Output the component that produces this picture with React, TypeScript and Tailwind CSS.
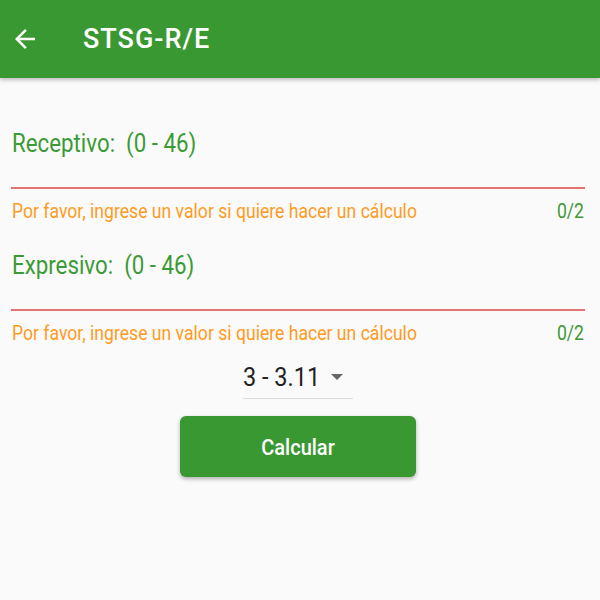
import React from "react";

function Field({ label, gapTop }: { label: string; gapTop: string }) {
  return (
    <div className="flex flex-col">
      <div className={`pl-[12px] h-[28px] leading-[28px] text-[22.3px] text-[#3b9a35] ${gapTop}`}>
        <span className="inline-block whitespace-pre scale-y-[1.12]">{label}</span>
      </div>
      <div className="mt-[30px] ml-[11px] mr-[15px] h-[2px] bg-[#e57373]"></div>
      <div className="flex justify-between pl-[12px] pr-[16px] mt-[12px] h-[20px] leading-[20px] text-[17.6px]">
        <span className="inline-block scale-y-[1.12] text-[#ff9a1f]">Por favor, ingrese un valor si quiere hacer un cálculo</span>
        <span className="inline-block scale-y-[1.12] text-[#3b9a35]">0/2</span>
      </div>
    </div>
  );
}

export default function App() {
  return (
    <div className="w-[600px] h-[600px] bg-[#fafafa] flex flex-col" style={{ fontFamily: "Roboto, 'Liberation Sans', sans-serif" }}>
      <div className="h-[78px] bg-[#3a9832] flex items-center shadow-[0_2px_4px_rgba(0,0,0,0.25)] relative z-10">
        <svg width="30" height="30" viewBox="0 0 24 24" className="ml-[10px]">
          <path d="M20 11H7.83l5.59-5.59L12 4l-8 8 8 8 1.41-1.41L7.83 13H20v-2z" fill="#ffffff" />
        </svg>
        <span className="ml-[43px] text-white text-[27px] font-medium tracking-[1px]">STSG-R/E</span>
      </div>
      <div className="flex flex-col">
        <Field label="Receptivo:  (0 - 46)" gapTop="mt-[51px]" />
        <Field label="Expresivo:  (0 - 46)" gapTop="mt-[30px]" />
      </div>
      <div className="flex flex-col items-center mt-[20px] pr-[4px]">
        <div className="w-[110px] border-b border-[#dcdcdc] flex items-center justify-between pb-[7px]">
          <span className="inline-block h-[28px] leading-[28px] text-[23.5px] text-[#222] scale-y-[1.12]">3 - 3.11</span>
          <svg width="14" height="8" viewBox="0 0 14 8" className="mr-[9px]"><path d="M1 1h12L7 7z" fill="#666" /></svg>
        </div>
        <button className="mt-[17px] w-[236px] h-[61px] rounded-[6px] bg-[#3a9832] text-white text-[20px] font-medium shadow-[0_2px_4px_rgba(0,0,0,0.3)]">
          <span className="inline-block scale-y-[1.12]">Calcular</span>
        </button>
      </div>
    </div>
  );
}
